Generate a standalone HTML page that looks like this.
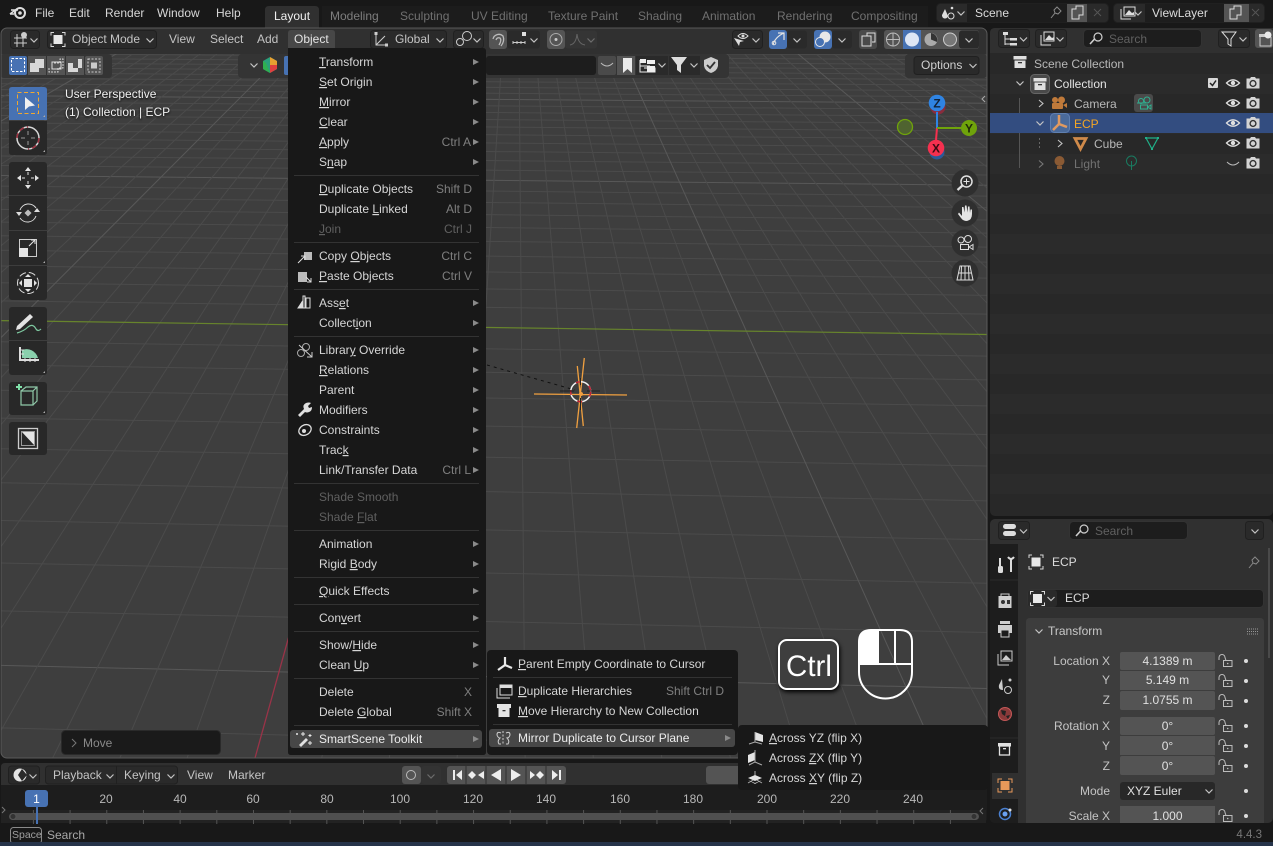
<!DOCTYPE html>
<html><head><meta charset="utf-8"><style>
html,body{margin:0;padding:0;background:#181818;overflow:hidden}
svg{display:block;position:absolute;left:0;top:0}
text{font-family:"Liberation Sans",sans-serif;font-size:12px;fill:#c4c4c4;white-space:pre}
.m text,text.m{fill:#d6d6d6}
.s{fill:#7f7f7f!important}
.r{text-anchor:end}
.c{text-anchor:middle}
.d{fill:#606060!important}
.u{text-decoration:underline}
.dd{fill:#2a2a2a;stroke:#202020}
.gb{fill:#545454}
.bb{fill:#4772b3}
.ln{fill:none;stroke:#d0d0d0;stroke-width:1.2}
.sep{fill:#333}
.w{fill:#e4e4e4}
</style></head><body>
<svg width="1273" height="846" viewBox="0 0 1273 846" xmlns="http://www.w3.org/2000/svg">
<defs>
<clipPath id="vc"><rect x="1" y="28" width="986" height="730" rx="6"/></clipPath>
<g id="ch"><path d="M-3.5-1.5 0 2 3.5-1.5" fill="none" stroke="#c4c4c4" stroke-width="1.2"/></g>
<g id="ar"><path d="M-3-3 3 0-3 3z" fill="#8a8a8a"/></g>
<g id="eye"><path d="M-6.5 0Q0-6.5 6.5 0 0 6.5-6.5 0z" fill="none" stroke="#e0e0e0" stroke-width="1.3"/><circle r="2.2" fill="#e0e0e0"/></g>
<g id="rc"><path d="M-6.5-4.5H-3L-2-6H2L3-4.5H6.5V5.5H-6.5z" fill="#d4d4d4"/><circle cy=".5" r="3.6" fill="#333"/><circle cy=".5" r="2.2" fill="#d4d4d4"/></g>
<g id="lk"><rect x="-1.5" y="-.5" width="8.5" height="6" fill="none" stroke="#bdbdbd"/><path d="M-6-1V-3.5A3 3 0 0 1 0-3.5L1-.5" fill="none" stroke="#bdbdbd"/><circle cx="2.700" cy="2.500" r=".8" fill="#bdbdbd"/></g>
<g id="dt"><circle r="2" fill="#dcdcdc"/></g>
<g id="ob"><rect x="-4.5" y="-4.5" width="9" height="9" fill="#e8e8e8"/><path d="M-7-4V-7H-4M4-7H7V-4M7 4V7H4M-4 7H-7V4" fill="none" stroke="#d8d8d8"/></g>
<g id="bx"><path d="M-6.5-6H6.5V-2.5H-6.5z" fill="#e0e0e0"/><path d="M-5.5-1.5H5.5V6H-5.5z" fill="#e0e0e0"/><rect x="-2" y="0" width="4" height="1.3" fill="#333"/></g>
<g id="sr"><circle cx="2" cy="-2" r="4" fill="none" stroke="#cfcfcf" stroke-width="1.2"/><path d="M-1-.5-6 5" stroke="#cfcfcf" stroke-width="1.6"/></g>
</defs>

<!-- top bar -->
<rect width="1273" height="28" fill="#181818"/>
<g transform="translate(18 13)"><path d="M-8 1-2-3.5M-7-3H0M-8 1H-4" stroke="#ddd" stroke-width="1.6" fill="none"/><circle cx="2" cy="0" r="5" fill="none" stroke="#ddd" stroke-width="2"/><circle cx="2" cy="0" r="1.8" fill="#ddd"/></g>
<g class="m"><text x="35" y="17">File</text><text x="69" y="17">Edit</text><text x="105" y="17">Render</text><text x="157" y="17">Window</text><text x="216" y="17">Help</text></g>
<path d="M319 28V10Q319 6 315 6H269Q265 6 265 10V28z" fill="#303030"/>
<rect x="322" y="6" width="606" height="21" fill="#1c1c1c"/>
<g><text x="274" y="20" fill="#fff" style="fill:#f0f0f0">Layout</text>
<g style="opacity:.85"><text class="s" x="330" y="20" style="fill:#8f8f8f!important">Modeling</text><text class="s" x="400" y="20">Sculpting</text><text class="s" x="471" y="20">UV Editing</text><text class="s" x="548" y="20">Texture Paint</text><text class="s" x="638" y="20">Shading</text><text class="s" x="702" y="20">Animation</text><text class="s" x="777" y="20">Rendering</text><text class="s" x="851" y="20">Compositing</text></g></g>

<!-- scene selectors -->
<rect class="dd" x="936.5" y="3.5" width="172" height="19" rx="4"/>
<rect x="967" y="4" width="100" height="18" fill="#1d1d1d"/>
<path d="M945 9L942 15A3 3 0 0 0 948 16zM953 13" fill="#ddd"/><circle cx="951" cy="16" r="3" fill="none" stroke="#ddd"/><circle cx="952" cy="8" r="1.3" fill="#ddd"/>
<use href="#ch" x="961" y="13"/>
<text class="w" x="975" y="17" style="fill:#dcdcdc">Scene</text>
<path d="M1051 18l4-5-1-3 3-3 4 4-3 3-3-1" fill="none" stroke="#8a8a8a"/>
<rect class="gb" x="1067" y="4" width="20" height="18"/>
<path d="M1072 9H1076V6H1083V15H1079V19H1072z" fill="none" stroke="#ddd"/>
<path d="M1094 9l7 7M1101 9l-7 7" stroke="#555"/>
<rect class="dd" x="1113.5" y="3.5" width="151" height="19" rx="4"/>
<rect x="1145" y="4" width="79" height="18" fill="#1d1d1d"/>
<path d="M1121 9V19H1131M1124 7H1135V16H1124z" fill="none" stroke="#ddd"/><path d="M1125 15l4-5 3 3 2-1v3z" fill="#ddd"/>
<use href="#ch" x="1138" y="13"/>
<text x="1152" y="17" style="fill:#dcdcdc">ViewLayer</text>
<rect class="gb" x="1224" y="4" width="25" height="18"/>
<path d="M1230 9H1234V6H1241V15H1237V19H1230z" fill="none" stroke="#ddd"/>
<path d="M1252 9l7 7M1259 9l-7 7" stroke="#555"/>

<!-- viewport -->
<rect x="1" y="28" width="986" height="730" rx="6" fill="#3e3e3e"/>
<g clip-path="url(#vc)">
<g id="grid"></g>
<path d="M0 320.6 987 334.5" stroke="#67842c" stroke-width="1.2"/>
<path d="M375.600 325 255 758" stroke="#9a3348" stroke-width="1.300"/>
<rect x="0" y="28" width="988" height="26" fill="#303030"/>
<rect x="0" y="54" width="112" height="24" rx="4" fill="#343434"/>
<rect x="238" y="54" width="491" height="24" rx="4" fill="#343434"/>
<rect x="905" y="54" width="82" height="24" rx="4" fill="#343434"/>
</g>
<rect x="1" y="28" width="986" height="730" rx="6" fill="none" stroke="#5a5a5a"/>

<!-- header row 1 -->
<rect class="dd" x="10.5" y="30.5" width="29" height="18" rx="3"/>
<path d="M14 38H27M14 43H27M17 34V47M23 34V47" stroke="#ccc" fill="none"/><circle cx="24" cy="35" r="3" fill="#ccc"/><use href="#ch" x="34" y="40"/>
<rect class="dd" x="47.5" y="30.5" width="109" height="18" rx="3"/>
<use href="#ob" x="58" y="39.5"/><text x="72" y="43">Object Mode</text><use href="#ch" x="150" y="40"/>
<text x="169" y="43">View</text><text x="210" y="43">Select</text><text x="257" y="43">Add</text>
<path d="M288 50V33Q288 30 291 30H332Q335 30 335 33V50z" fill="#474747"/><text x="294" y="43" style="fill:#e4e4e4">Object</text>
<rect class="dd" x="370.5" y="30.5" width="76" height="18" rx="3"/>
<path d="M376 33V45H387M376 45 385 36" fill="none" stroke="#ccc"/><rect x="374.500" y="32" width="3" height="3" fill="#ccc"/><rect x="385" y="43.500" width="3" height="3" fill="#ccc"/>
<text x="395" y="43">Global</text><use href="#ch" x="440" y="40"/>
<rect class="dd" x="453.500" y="30.5" width="30" height="18" rx="3"/>
<circle cx="460" cy="42" r="3.500" fill="none" stroke="#ccc"/><circle cx="467" cy="36" r="4.500" fill="none" stroke="#ccc"/><use href="#ch" x="477" y="40"/>
<rect x="489" y="30" width="18" height="19" rx="3" fill="#545454"/>
<path d="M493 39A6 6 0 0 1 503 36Q505 41 501 46M496 40Q497 37 500 38 502 40 499 45" fill="none" stroke="#bbb" stroke-width="1.300"/>
<rect x="507" y="30.500" width="33" height="18" rx="3" fill="#2a2a2a"/>
<path d="M513 41V44M517 41V44M521 41V44M525 41V44M513 42.500H525" stroke="#ccc"/><rect x="522" y="32" width="4" height="4" fill="#ddd"/><use href="#ch" x="534" y="40"/>
<rect x="547" y="30" width="18" height="19" rx="3" fill="#545454"/><circle cx="556" cy="39.500" r="6" fill="none" stroke="#aaa"/><circle cx="556" cy="39.500" r="1.500" fill="#ccc"/>
<rect x="565" y="30.500" width="32" height="18" rx="3" fill="#353535"/><path d="M570 45Q576 44 577 34 578 44 585 45" fill="none" stroke="#666"/><use href="#ch" x="591" y="40" opacity=".4"/>

<rect class="dd" x="732.500" y="30.500" width="30" height="18" rx="3"/>
<path d="M738 36Q743 31 748 36 743 41 738 36z" fill="none" stroke="#ddd"/><circle cx="743" cy="36" r="1.500" fill="#ddd"/><path d="M734 38 739 46 740 42 744 41z" fill="#ddd"/><use href="#ch" x="756" y="40"/>
<rect class="bb" x="769" y="30" width="18" height="19" rx="3"/><rect x="787" y="30.500" width="20" height="18" rx="3" fill="#2a2a2a"/>
<path d="M773 45Q775 37 784 33M778 33H784V40" fill="none" stroke="#e4e4e4" stroke-width="1.200"/><circle cx="774" cy="43" r="1.800" fill="none" stroke="#e4e4e4"/><use href="#ch" x="797" y="40"/>
<rect class="bb" x="814" y="30" width="18" height="19" rx="3"/><rect x="832" y="30.500" width="20" height="18" rx="3" fill="#2a2a2a"/>
<circle cx="825" cy="37" r="5.500" fill="#e8e8e8"/><circle cx="820" cy="42" r="4.500" fill="#4772b3" stroke="#e8e8e8"/><use href="#ch" x="842" y="40"/>
<rect x="859" y="30" width="18" height="19" rx="3" fill="#4a4a4a"/><path d="M867 36V33H875V42H872M862 36H871V46H862z" fill="none" stroke="#ddd"/>
<rect x="884" y="30" width="95" height="19" rx="3" fill="#545454"/>
<rect class="bb" x="903" y="30" width="18" height="19"/><rect x="959" y="30.500" width="20" height="18" rx="3" fill="#2a2a2a"/>
<circle cx="893" cy="39.500" r="6.500" fill="none" stroke="#bbb"/><path d="M887 39.500H900M893 33V46" stroke="#bbb"/>
<circle cx="912" cy="39.500" r="7" fill="#dde6f5"/>
<circle cx="931" cy="39.500" r="6.500" fill="#aaa"/><path d="M931 33V39.500L937 42A7 7 0 0 0 931 33z" fill="#333"/>
<circle cx="950" cy="39.500" r="6.500" fill="#777" stroke="#ccc"/><use href="#ch" x="969" y="40"/>

<!-- header row 2 -->
<rect class="bb" x="9" y="56" width="18" height="19" rx="2"/><rect class="gb" x="28" y="56" width="18" height="19"/><rect class="gb" x="47" y="56" width="18" height="19"/><rect class="gb" x="66" y="56" width="18" height="19"/><rect class="gb" x="85" y="56" width="18" height="19" rx="2"/>
<rect x="11.500" y="58.500" width="13" height="13" fill="none" stroke="#fff" stroke-dasharray="2.500 1.500"/>
<path d="M30 63H35V59H44V68H39V72H30z" fill="#d8d8d8"/>
<path d="M54 63H60V59H63V68H58V72H49V68" fill="none" stroke="#d0d0d0" stroke-dasharray="2 1"/><rect x="52" y="62" width="9" height="7" fill="none" stroke="#ddd"/>
<path d="M73 63H78V59H82V68H78V72H68V63z" fill="#d8d8d8"/><rect x="73" y="63" width="5" height="5" fill="#545454"/>
<rect x="88" y="59" width="12" height="13" fill="none" stroke="#ccc" stroke-dasharray="2 1.500"/><rect x="91" y="62.500" width="6" height="6" fill="#ccc"/>
<use href="#ch" x="254" y="65"/>
<path d="M270 57 277 61V69L270 73 263 69V61z" fill="#2aa07a"/><path d="M270 57 277 61V65H270z" fill="#e8a030"/><path d="M270 73 263 69V61L266 63z" fill="#30b050"/><path d="M277 65V69L270 73V65z" fill="#e04040"/>
<rect class="bb" x="284" y="56" width="6" height="19" rx="2"/>
<rect x="486" y="56" width="110" height="19" rx="3" fill="#1d1d1d"/>
<rect x="598" y="56" width="18" height="19" rx="2" fill="#4a4a4a"/><path d="M601 63Q607 69 613 63" fill="none" stroke="#bbb"/>
<rect x="617" y="56" width="18" height="19" fill="#545454"/><path d="M623 58H632V73L627.500 69 623 73z" fill="#eaeaea"/>
<rect x="636" y="56" width="32" height="19" fill="#2a2a2a"/><path d="M640 60V72H655V68H644M640 66H650" fill="none" stroke="#eee"/><rect x="640" y="59" width="6" height="4" fill="#eee"/><rect x="647" y="60" width="8" height="4" fill="#eee"/><rect x="647" y="66" width="8" height="6" fill="#eee"/><use href="#ch" x="662" y="65"/>
<rect x="669" y="56" width="31" height="19" fill="#2a2a2a"/><path d="M671 57H687L681 65V73L677 70V65z" fill="#ddd"/><use href="#ch" x="694" y="65"/>
<path d="M704 60 711 57 718 60V66Q717 71 711 73 705 71 704 66z" fill="#ccc"/><path d="M707 65 710 68 715 62" fill="none" stroke="#333" stroke-width="1.800"/>
<rect class="dd" x="914" y="56.500" width="65" height="18" rx="3"/><text x="921" y="69" style="fill:#d0d0d0">Options</text><use href="#ch" x="973" y="65.500"/>

<!-- toolbar -->
<path d="M9 90Q9 87 12 87H44Q47 87 47 90V120H9z" fill="#4772b3"/>
<path d="M9 121H47V152Q47 155 44 155H12Q9 155 9 152z" fill="#282828"/>
<rect x="9" y="162" width="38" height="138" rx="3" fill="#282828"/>
<path d="M9 195.500H47M9 230.500H47M9 265.500H47" stroke="#3d3d3d"/>
<rect x="9" y="307" width="38" height="68" rx="3" fill="#282828"/><path d="M9 340.500H47" stroke="#3d3d3d"/>
<rect x="9" y="382" width="38" height="33" rx="3" fill="#282828"/>
<rect x="9" y="422" width="38" height="33" rx="3" fill="#282828"/>
<rect x="17.500" y="92.500" width="21" height="21" fill="none" stroke="#f0a830" stroke-dasharray="4 2.500"/>
<path d="M25 97V110L29 106.500 35 105.500z" fill="#f0f0f0"/>
<circle cx="28" cy="138" r="11" fill="none" stroke="#d8d8d8" stroke-width="1.500"/><path d="M17 138A11 11 0 0 1 28 127M39 138A11 11 0 0 1 28 149" fill="none" stroke="#a03040" stroke-width="1.500" stroke-dasharray="5 3"/><path d="M21 138H25M31 138H35M28 131V135M28 141V145" stroke="#999"/>
<path d="M28 167 31 171H25zM28 189 31 185H25zM17 178 21 175V181zM39 178 35 175V181z" fill="#e4e4e4"/><path d="M22 178H25M31 178H34M28 172V175M28 181V184" stroke="#e4e4e4"/>
<rect x="25.500" y="210.500" width="5" height="5" transform="rotate(45 28 213)" fill="#bbb"/><path d="M20 210A9 9 0 0 1 36 208M36 216A9 9 0 0 1 20 218" fill="none" stroke="#ddd"/><path d="M16 212H22L19 216zM34 212H40L37 208z" fill="#ddd"/>
<rect x="19.500" y="239.500" width="17" height="17" fill="none" stroke="#ccc"/><rect x="19" y="248" width="9" height="9" fill="#e4e4e4"/><path d="M29 246 35 240M31 240H35V244" fill="none" stroke="#e4e4e4"/>
<circle cx="28" cy="283" r="10.500" fill="none" stroke="#ddd" stroke-dasharray="7 3"/><rect x="24" y="279" width="8" height="8" fill="#e4e4e4"/><path d="M28 274 25 277H31zM28 292 25 289H31zM19 283 22 280V286zM37 283 34 280V286z" fill="#e4e4e4"/>
<path d="M17 326 30 314 33 317 20 329 16 330z" fill="#e4e4e4"/><path d="M17 333Q24 331 28 327 33 323 36 329 38 332 41 329" fill="none" stroke="#7ec8a0" stroke-width="1.200"/>
<path d="M20 347V360H39" fill="none" stroke="#ddd" stroke-width="2"/><path d="M22 350A12 12 0 0 1 38 358H22z" fill="#8ad0ad"/><path d="M21 350H24M21 354H24M25 362V358M30 362V358M35 362V358" stroke="#ddd"/>
<path d="M21 391H33V405H21zM21 391 26 387H37V401L33 405M33 391 37 387" fill="none" stroke="#8fc8a8" stroke-width="1.200"/><path d="M19 384V390M16 387H22" stroke="#7fe0a8" stroke-width="2"/>
<rect x="18.500" y="428.500" width="19" height="20" fill="none" stroke="#ccc" stroke-width="1.300"/><path d="M21 431H35V446z" fill="#e4e4e4"/><rect x="21.500" y="431.500" width="13" height="14" fill="none" stroke="#999"/>
<path d="M43 117h2v-2z M43 152h2v-2zM43 263h2v-2zM43 373h2v-2zM43 413h2v-2z" fill="#aaa"/>

<!-- viewport overlays -->
<g style="filter:drop-shadow(0 1px 1px #000)"><text x="65" y="98" style="fill:#f2f2f2">User Perspective</text><text x="65" y="116" style="fill:#f2f2f2">(1) Collection | ECP</text></g>

<path d="M487 365 575 390" stroke="#111" stroke-dasharray="3 4"/>
<path d="M534 394 627 395M577.300 366 583.300 426M584.300 358 576.700 428" stroke="#f0a040" stroke-width="1.300" fill="none"/>
<circle cx="580.700" cy="391.700" r="10" fill="none" stroke="#f2f2f2" stroke-width="1.500"/><circle cx="580.700" cy="391.700" r="10" fill="none" stroke="#c02030" stroke-width="1.500" stroke-dasharray="5 9"/>
<path d="M560 391H574M587 391H600M580.500 378V385M580.500 398V410" stroke="#222"/><circle cx="581" cy="394" r="2" fill="#f0a040"/>

<!-- gizmo -->
<circle cx="905" cy="127" r="7.500" fill="#4f6330" stroke="#6fa30b" stroke-width="1.300"/>
<circle cx="938" cy="107" r="7.500" fill="#8a2c3c"/><circle cx="937" cy="152" r="7.500" fill="#2a5a9a"/>
<path d="M937 112V128" stroke="#2f84e3" stroke-width="2"/><path d="M937 128 936 140" stroke="#f5304f" stroke-width="2"/><path d="M937 128H961" stroke="#6fa30b" stroke-width="2"/>
<circle cx="937" cy="103" r="8.300" fill="#2f84e3"/><circle cx="969" cy="128" r="8" fill="#6fa30b"/><circle cx="936" cy="148" r="8.300" fill="#f5304f"/>
<g style="font-weight:bold"><text class="c" x="937" y="107.500" style="fill:#12233a;font-weight:bold">Z</text><text class="c" x="969" y="132.500" style="fill:#1e2a08;font-weight:bold">Y</text><text class="c" x="936" y="152.500" style="fill:#3a0a12;font-weight:bold">X</text></g>
<circle cx="965" cy="183" r="13.500" fill="#2f2f2f"/><circle cx="965" cy="213" r="13.500" fill="#2f2f2f"/><circle cx="965" cy="243" r="13.500" fill="#2f2f2f"/><circle cx="965" cy="273" r="13.500" fill="#2f2f2f"/>
<circle cx="966.500" cy="181.500" r="5.500" fill="none" stroke="#e0e0e0" stroke-width="1.500"/><path d="M963 185 957.500 190" stroke="#e0e0e0" stroke-width="2.200"/><path d="M963.500 181.500H969.500M966.500 178.500V184.500" stroke="#e0e0e0"/>
<path d="M958 214 961 218Q963 221 967 221 972 220 972 214V209.500L970.500 209.500 970 213 969.500 206.500H968L967.500 212.500 966.500 205.500H965L964.500 212.500 963.500 207H962L962 216 959 212.500z" fill="#e4e4e4"/>
<circle cx="961" cy="240" r="3" fill="none" stroke="#ddd"/><circle cx="968" cy="239" r="3.500" fill="none" stroke="#ddd"/><rect x="960.500" y="244.500" width="8" height="5" fill="none" stroke="#ddd"/><path d="M969 247 973 244.500V249.500z" fill="none" stroke="#ddd"/>
<path d="M960 266H970L973 280H957zM965 266V280M958.500 273H971.500M961.500 266 961 280M968.500 266 969 280" fill="none" stroke="#ddd"/>
<path d="M985 96 982 99 985 102" fill="none" stroke="#aaa"/>

<!-- ctrl / mouse -->
<g style="filter:drop-shadow(1px 2px 2px #000)">
<rect x="779" y="640" width="59" height="49" rx="8" fill="#3e3e3e" stroke="#fff" stroke-width="2"/>
<text class="c" x="809" y="676" style="font-size:29.500px;fill:#fff">Ctrl</text></g>
<path d="M859 664V642Q859 630 871 630H878V664z" fill="#fff"/>
<path d="M859 664V642Q859 630 871 630H900Q912 630 912 642V672A26.500 26.500 0 0 1 859 672zM859 664H912M878 630V664M895 630V664" fill="none" stroke="#fff" stroke-width="2"/>

<!-- Move panel -->
<rect x="61.500" y="730.500" width="159" height="24" rx="4" fill="#1a1a1a" stroke="#2a2a2a"/>
<path d="M72 739 76 743 72 747" fill="none" stroke="#777"/><text x="83" y="747" class="s" style="fill:#8a8a8a!important">Move</text>

<!-- timeline -->
<path d="M1 785V767Q1 763 5 763H983Q987 763 987 767V785z" fill="#303030"/>
<path d="M1 785H987V818Q987 822 983 822H5Q1 822 1 818z" fill="#1d1d1d"/>
<rect class="dd" x="8.500" y="766" width="31" height="18" rx="3"/><circle cx="20" cy="775" r="6.500" fill="#e4e4e4"/><path d="M22 769 18 775 22 781 27 775z" fill="#2a2a2a"/><use href="#ch" x="33" y="776"/>
<rect class="dd" x="45.500" y="766" width="132" height="18" rx="3"/><path d="M116.500 766V784" stroke="#202020"/>
<text x="53" y="779">Playback</text><use href="#ch" x="110" y="776"/><text x="124" y="779">Keying</text><use href="#ch" x="171" y="776"/>
<text x="187" y="779">View</text><text x="228" y="779">Marker</text>
<rect x="402" y="766" width="19" height="18" rx="3" fill="#545454"/><circle cx="411" cy="775" r="4.500" fill="none" stroke="#bbb"/><rect x="421" y="766" width="20" height="18" rx="3" fill="#333"/><use href="#ch" x="431" y="776" opacity=".4"/>
<rect x="447" y="766" width="119" height="18" rx="3" fill="#545454"/>
<path d="M466 766V784M486 766V784M506 766V784M526 766V784M546 766V784" stroke="#303030"/>
<path d="M453 770V780H455V770zM462 770 456 775 462 780z" fill="#eee"/>
<path d="M472 771 476 775 472 779 468 775zM478 775 484 771V779z" fill="#eee"/>
<path d="M501 769 491 775 501 781z" fill="#eee"/><path d="M511 769 521 775 511 781z" fill="#eee"/>
<path d="M530 771 535 775 530 779zM540 771 544 775 540 779 536 775z" fill="#eee"/>
<path d="M552 770 558 775 552 780zM559 770H561V780H559z" fill="#eee"/>
<rect x="706" y="766" width="40" height="18" rx="3" fill="#545454"/>
<rect x="1" y="810" width="985" height="13" fill="#222"/>
<g id="ticks"></g>
<rect x="9" y="813" width="970" height="7" rx="3.500" fill="#505050"/><circle cx="13" cy="816.500" r="3" fill="#333" stroke="#555"/><circle cx="974" cy="816.500" r="3" fill="#333" stroke="#555"/>
<g><text class="c" x="106" y="803" style="fill:#b8b8b8">20</text><text class="c" x="180" y="803" style="fill:#b8b8b8">40</text><text class="c" x="253" y="803" style="fill:#b8b8b8">60</text><text class="c" x="327" y="803" style="fill:#b8b8b8">80</text><text class="c" x="400" y="803" style="fill:#b8b8b8">100</text><text class="c" x="473" y="803" style="fill:#b8b8b8">120</text><text class="c" x="546" y="803" style="fill:#b8b8b8">140</text><text class="c" x="620" y="803" style="fill:#b8b8b8">160</text><text class="c" x="693" y="803" style="fill:#b8b8b8">180</text><text class="c" x="767" y="803" style="fill:#b8b8b8">200</text><text class="c" x="840" y="803" style="fill:#b8b8b8">220</text><text class="c" x="913" y="803" style="fill:#b8b8b8">240</text></g>
<rect x="36" y="805" width="2" height="19" fill="#4772b3"/><rect class="bb" x="25" y="790" width="23" height="17" rx="3"/><text class="c" x="36.500" y="803" style="fill:#fff">1</text>
<path d="M2 807 5 810 2 813M983 808 980 811 983 814" fill="none" stroke="#777"/>

<!-- status bar -->
<rect y="824" width="1273" height="18" fill="#181818"/>
<rect x="10.500" y="827.500" width="31" height="16" rx="3" fill="none" stroke="#8a8a8a"/>
<text x="12" y="838" style="fill:#a0a0a0;font-size:10.500px">Space</text><text x="47" y="839" style="fill:#a8a8a8">Search</text>
<text class="r" x="1262" y="838" style="fill:#777;font-size:11.500px">4.4.3</text>
<rect y="842" width="1273" height="4" fill="#26344a"/>

<!-- outliner -->
<rect x="990" y="28" width="283" height="488" rx="5" fill="#282828"/>
<path d="M990 53V33Q990 28 995 28H1273V53z" fill="#303030"/>
<path d="M990 74H1273V94H990zM990 114H1273V134H990zM990 154H1273V174H990zM990 194H1273V214H990zM990 234H1273V254H990zM990 274H1273V294H990zM990 314H1273V334H990zM990 354H1273V374H990zM990 394H1273V414H990zM990 434H1273V454H990zM990 474H1273V494H990z" fill="#2b2b2b"/>
<rect class="dd" x="998.500" y="29.500" width="31" height="18" rx="3"/><path d="M1005 35V45M1005 39H1010M1005 44H1010" stroke="#ddd" fill="none"/><rect x="1003" y="32" width="5" height="3" fill="#ddd"/><rect x="1010" y="38" width="7" height="2.500" fill="#ddd"/><rect x="1010" y="43" width="7" height="2.500" fill="#ddd"/><use href="#ch" x="1023.500" y="39"/>
<rect class="dd" x="1035.500" y="29.500" width="31" height="18" rx="3"/><path d="M1041 35V45H1051M1044 32H1054V41H1044z" fill="none" stroke="#ddd"/><path d="M1045 40l4-5 3 3 2-1v3z" fill="#ddd"/><use href="#ch" x="1060" y="39"/>
<rect x="1083.500" y="29.500" width="118" height="18" rx="4" fill="#1d1d1d" stroke="#333"/><use href="#sr" x="1096" y="39"/><text x="1109" y="43" style="fill:#606060">Search</text>
<rect class="dd" x="1218.500" y="29.500" width="31" height="18" rx="3"/><path d="M1222 32H1236L1231 39V46L1228 44V39z" fill="none" stroke="#ddd"/><use href="#ch" x="1243" y="39"/>
<rect x="1255" y="29" width="18" height="19" rx="3" fill="#545454"/><path d="M1260 37V46H1271V37" fill="none" stroke="#ccc"/><rect x="1259" y="34" width="12" height="3" fill="#ccc"/><circle cx="1268" cy="35" r="3.500" fill="#e8e8e8"/>

<use href="#bx" x="1020" y="62"/><text x="1034" y="68" style="fill:#b8b8b8">Scene Collection</text>
<use href="#ch" x="1020" y="83"/><rect x="1030.500" y="74.500" width="19" height="19" rx="4" fill="#4a4a4a" stroke="#666"/><use href="#bx" x="1040" y="84"/><text x="1054" y="88" style="fill:#e4e4e4">Collection</text>
<rect x="1208" y="78" width="10" height="10" rx="1" fill="#d8d8d8"/><path d="M1210 83 1212.500 85.500 1216 80.500" fill="none" stroke="#222" stroke-width="1.500"/>
<use href="#eye" x="1233" y="83"/><use href="#rc" x="1253" y="83"/>
<path d="M1019.500 98V168" stroke="#555"/>
<path d="M1039 100 1043 103.500 1039 107" fill="none" stroke="#c4c4c4" stroke-width="1.100"/>
<circle cx="1055" cy="100" r="3" fill="#c07a3a"/><circle cx="1061.500" cy="100" r="3.500" fill="#c07a3a"/><rect x="1052" y="103" width="11" height="6" rx="1" fill="#c07a3a"/><path d="M1063 105 1067 103V108z" fill="#c07a3a"/>
<text x="1074" y="108" style="fill:#b8b8b8">Camera</text>
<rect x="1134" y="94" width="19" height="18" rx="3" fill="#4a4a4a"/><circle cx="1141" cy="101" r="2.500" fill="none" stroke="#30b090"/><circle cx="1147" cy="100" r="3" fill="none" stroke="#30b090"/><rect x="1140.500" y="105" width="7" height="4" fill="none" stroke="#30b090"/><path d="M1147.500 107 1151 105V109zM1137 103H1146" fill="none" stroke="#30b090"/>
<use href="#eye" x="1233" y="103"/><use href="#rc" x="1253" y="103"/>
<rect x="990" y="113" width="283" height="20" fill="#334d80"/>
<use href="#ch" x="1040" y="123"/><rect x="1050.500" y="113.500" width="19" height="19" rx="4" fill="#4a6a9a" stroke="#6080b0"/>
<path d="M1059 115V124L1053 130M1059 124 1067 127" fill="none" stroke="#e09a60" stroke-width="2.500"/>
<text x="1074" y="128" style="fill:#f5a623">ECP</text><use href="#eye" x="1233" y="123"/><use href="#rc" x="1253" y="123"/>
<path d="M1039.500 138V149" stroke="#666" stroke-dasharray="2 2"/>
<path d="M1058 140 1062 143.500 1058 147" fill="none" stroke="#c4c4c4" stroke-width="1.100"/>
<path d="M1075 138.500H1086L1080.500 149z" fill="none" stroke="#d08a4a" stroke-width="2.800"/>
<text x="1094" y="148" style="fill:#b8b8b8">Cube</text>
<path d="M1146 138H1158L1152 149z" fill="none" stroke="#20b088" stroke-width="1.200"/><path d="M1146 137V139M1158 137V139M1152 148V150" stroke="#20b088" stroke-width="2"/>
<use href="#eye" x="1233" y="143"/><use href="#rc" x="1253" y="143"/>
<path d="M1039 160.500 1043 164 1039 167.500" fill="none" stroke="#777" stroke-width="1.100"/>
<circle cx="1059.500" cy="161" r="5" fill="#8a5a34"/><rect x="1057" y="166" width="5" height="3" fill="#8a5a34"/>
<text x="1074" y="168" style="fill:#727272">Light</text>
<circle cx="1131.500" cy="161" r="5" fill="none" stroke="#1a7a60"/><path d="M1131.500 161V170" stroke="#1a7a60"/>
<path d="M1227 162Q1233 168 1239 162" fill="none" stroke="#bbb"/><use href="#rc" x="1253" y="163"/>

<!-- properties -->
<rect x="990" y="519" width="283" height="304" rx="5" fill="#303030"/>
<path d="M990 544H1018V823H995Q990 823 990 818z" fill="#1d1d1d"/>
<path d="M990 580H1018M990 738H1018" stroke="#2a2a2a"/>
<rect class="dd" x="998.500" y="521.500" width="31" height="18" rx="3"/><rect x="1003" y="524" width="13" height="5" rx="2.500" fill="#ddd"/><rect x="1003" y="531" width="13" height="5" rx="2.500" fill="#ddd"/><use href="#ch" x="1023.500" y="531"/>
<rect x="1069.500" y="521.500" width="118" height="18" rx="4" fill="#1d1d1d" stroke="#333"/><use href="#sr" x="1082" y="531"/><text x="1095" y="535" style="fill:#606060">Search</text>
<rect class="dd" x="1245.500" y="521.500" width="18" height="18" rx="3"/><use href="#ch" x="1255" y="531"/>

<path d="M992 773H1018V799H992Q992 786 992 773z" fill="#303030"/>
<path d="M1000 558V566M1011 558V572M1008 557Q1011 561 1014 557" stroke="#ddd" stroke-width="2" fill="none"/><rect x="998" y="566" width="5" height="7" rx="1.500" fill="#ddd"/>
<rect x="998.500" y="596" width="13" height="12" fill="#cfcfcf"/><path d="M1001 596V594H1009V596" fill="none" stroke="#ccc"/><circle cx="1003" cy="602" r="2" fill="#333"/><rect x="1007" y="600" width="3" height="4" fill="#333"/>
<path d="M998 625H1012V633H998z" fill="#cfcfcf"/><rect x="1000" y="621" width="10" height="3" fill="#cfcfcf"/><rect x="1001" y="630" width="8" height="7" fill="#1d1d1d" stroke="#ccc"/>
<path d="M998 654V665H1009M1001 651H1012V661H1001z" fill="none" stroke="#ccc"/><path d="M1002 660 1006 655 1011 660z" fill="#ccc"/>
<path d="M1002 679 999 685Q998 690 1003 690z" fill="#ccc"/><circle cx="1008" cy="690" r="3.500" fill="none" stroke="#ccc"/><circle cx="1010" cy="680" r="1.500" fill="#ccc"/>
<circle cx="1005" cy="714" r="6.500" fill="#8a3a3a" stroke="#c45858"/><path d="M1001 710 1006 711 1005 716 1002 714zM1006 716 1010 715 1008 719z" fill="#222"/>
<rect x="998" y="743" width="13" height="3.500" fill="#e0e0e0"/><rect x="999.500" y="746" width="10" height="9" fill="none" stroke="#e0e0e0" stroke-width="1.300"/><rect x="1003" y="748" width="3" height="1.300" fill="#e0e0e0"/>
<rect x="1000.500" y="781" width="9" height="9" fill="#e8995a"/><path d="M998 783V779H1002M1008 779H1012V783M1012 788V792H1008M1002 792H998V788" fill="none" stroke="#e8995a"/>
<circle cx="1005" cy="814" r="5.500" fill="none" stroke="#4a80d0" stroke-width="1.500"/><circle cx="1005" cy="814" r="2.500" fill="#6aa0f0"/><circle cx="1010" cy="810" r="1.500" fill="#ddd"/>

<use href="#ob" x="1036" y="562"/><text x="1052" y="566" style="fill:#dcdcdc">ECP</text>
<path d="M1249 568l4-5-1-3 3-3 4 4-3 3-3-1" fill="none" stroke="#888"/>
<rect x="1027.500" y="589.500" width="236" height="18" rx="4" fill="#1d1d1d" stroke="#333"/><rect x="1028" y="590" width="29" height="17" rx="3" fill="#2a2a2a"/><use href="#ob" x="1037.500" y="598.500"/><use href="#ch" x="1051" y="598.500"/>
<text x="1065" y="602" style="fill:#dcdcdc">ECP</text>

<path d="M1026 823V622Q1026 618 1030 618H1260Q1264 618 1264 622V823z" fill="#3d3d3d"/>
<use href="#ch" x="1039" y="631"/><text x="1048" y="635" style="fill:#c8c8c8">Transform</text>
<path d="M1247 629h11M1247 631.500h11M1247 634h11" stroke="#999" stroke-dasharray="1 1"/>
<g>
<rect class="gb" x="1120" y="652" width="95" height="18" rx="2"/><rect class="gb" x="1120" y="671" width="95" height="19"/><rect class="gb" x="1120" y="691" width="95" height="19" rx="2"/>
<rect class="gb" x="1120" y="717" width="95" height="18" rx="2"/><rect class="gb" x="1120" y="736" width="95" height="19"/><rect class="gb" x="1120" y="756" width="95" height="19" rx="2"/>
<rect x="1120" y="782" width="95" height="18" rx="3" fill="#282828"/><path d="M1120 806H1215V823H1120z" fill="#545454"/></g>
<g><text class="r" x="1110" y="665">Location X</text><text class="r" x="1110" y="684">Y</text><text class="r" x="1110" y="704">Z</text><text class="r" x="1110" y="730">Rotation X</text><text class="r" x="1110" y="750">Y</text><text class="r" x="1110" y="770">Z</text><text class="r" x="1110" y="795">Mode</text><text class="r" x="1110" y="820">Scale X</text></g>
<g><text class="c" x="1167.500" y="665" style="fill:#e0e0e0">4.1389 m</text><text class="c" x="1167.500" y="684" style="fill:#e0e0e0">5.149 m</text><text class="c" x="1167.500" y="704" style="fill:#e0e0e0">1.0755 m</text><text class="c" x="1167.500" y="730" style="fill:#e0e0e0">0°</text><text class="c" x="1167.500" y="750" style="fill:#e0e0e0">0°</text><text class="c" x="1167.500" y="770" style="fill:#e0e0e0">0°</text><text x="1127" y="795" style="fill:#e0e0e0">XYZ Euler</text><text class="c" x="1167.500" y="820" style="fill:#e0e0e0">1.000</text></g>
<use href="#ch" x="1209" y="791"/>
<use href="#lk" x="1225" y="661"/><use href="#lk" x="1225" y="681"/><use href="#lk" x="1225" y="701"/><use href="#lk" x="1225" y="726"/><use href="#lk" x="1225" y="746"/><use href="#lk" x="1225" y="766"/><use href="#lk" x="1225" y="816"/>
<use href="#dt" x="1246" y="661"/><use href="#dt" x="1246" y="681"/><use href="#dt" x="1246" y="701"/><use href="#dt" x="1246" y="726"/><use href="#dt" x="1246" y="746"/><use href="#dt" x="1246" y="766"/><use href="#dt" x="1246" y="791"/><use href="#dt" x="1246" y="816"/>
<rect x="1268" y="548" width="2" height="110" fill="#4a4a4a"/>

<!-- main menu -->
<path d="M288 48H483Q486 48 486 51V752Q486 755 483 755H291Q288 755 288 752z" fill="#181818"/>
<g class="sep"><rect x="294" y="175" width="185" height="1"/><rect x="294" y="242" width="185" height="1"/><rect x="294" y="289" width="185" height="1"/><rect x="294" y="336" width="185" height="1"/><rect x="294" y="483" width="185" height="1"/><rect x="294" y="530" width="185" height="1"/><rect x="294" y="577" width="185" height="1"/><rect x="294" y="604" width="185" height="1"/><rect x="294" y="631" width="185" height="1"/><rect x="294" y="678" width="185" height="1"/><rect x="294" y="725" width="185" height="1"/></g>
<rect x="290" y="730" width="192" height="18" rx="3" fill="#474747"/>
<g class="m">
<text x="319" y="66"><tspan class="u">T</tspan>ransform</text>
<text x="319" y="86"><tspan class="u">S</tspan>et Origin</text>
<text x="319" y="106"><tspan class="u">M</tspan>irror</text>
<text x="319" y="126"><tspan class="u">C</tspan>lear</text>
<text x="319" y="146"><tspan class="u">A</tspan>pply</text>
<text x="319" y="166">S<tspan class="u">n</tspan>ap</text>
<text x="319" y="193"><tspan class="u">D</tspan>uplicate Objects</text>
<text x="319" y="213">Duplicate <tspan class="u">L</tspan>inked</text>
<text x="319" y="233" class="d"><tspan class="u">J</tspan>oin</text>
<text x="319" y="260">Copy <tspan class="u">O</tspan>bjects</text>
<text x="319" y="280"><tspan class="u">P</tspan>aste Objects</text>
<text x="319" y="307">Ass<tspan class="u">e</tspan>t</text>
<text x="319" y="327">Collect<tspan class="u">i</tspan>on</text>
<text x="319" y="354">Librar<tspan class="u">y</tspan> Override</text>
<text x="319" y="374"><tspan class="u">R</tspan>elations</text>
<text x="319" y="394">Parent</text>
<text x="319" y="414">Modifiers</text>
<text x="319" y="434">Constraints</text>
<text x="319" y="454">Trac<tspan class="u">k</tspan></text>
<text x="319" y="474">Link/Transfer Data</text>
<text x="319" y="501" class="d">Shade Smooth</text>
<text x="319" y="521" class="d">Shade <tspan class="u">F</tspan>lat</text>
<text x="319" y="548">Animation</text>
<text x="319" y="568">Rigid <tspan class="u">B</tspan>ody</text>
<text x="319" y="595"><tspan class="u">Q</tspan>uick Effects</text>
<text x="319" y="622">Con<tspan class="u">v</tspan>ert</text>
<text x="319" y="649">Show/<tspan class="u">H</tspan>ide</text>
<text x="319" y="669">Clean <tspan class="u">U</tspan>p</text>
<text x="319" y="696">Delete</text>
<text x="319" y="716">Delete <tspan class="u">G</tspan>lobal</text>
<text x="319" y="743" style="fill:#ececec">SmartScene Toolkit</text>
</g>
<g><text class="s r" x="471" y="146">Ctrl A</text><text class="s r" x="472" y="193">Shift D</text><text class="s r" x="472" y="213">Alt D</text><text class="d r" x="472" y="233">Ctrl J</text><text class="s r" x="472" y="260">Ctrl C</text><text class="s r" x="472" y="280">Ctrl V</text><text class="s r" x="471" y="474">Ctrl L</text><text class="s r" x="472" y="696">X</text><text class="s r" x="472" y="716">Shift X</text></g>
<use href="#ar" x="476" y="62"/><use href="#ar" x="476" y="82"/><use href="#ar" x="476" y="102"/><use href="#ar" x="476" y="122"/><use href="#ar" x="476" y="142"/><use href="#ar" x="476" y="162"/><use href="#ar" x="476" y="303"/><use href="#ar" x="476" y="323"/><use href="#ar" x="476" y="350"/><use href="#ar" x="476" y="370"/><use href="#ar" x="476" y="390"/><use href="#ar" x="476" y="410"/><use href="#ar" x="476" y="430"/><use href="#ar" x="476" y="450"/><use href="#ar" x="476" y="470"/><use href="#ar" x="476" y="544"/><use href="#ar" x="476" y="564"/><use href="#ar" x="476" y="591"/><use href="#ar" x="476" y="618"/><use href="#ar" x="476" y="645"/><use href="#ar" x="476" y="665"/><use href="#ar" x="476" y="739"/>
<!-- menu icons -->
<path d="M304 252H312V260H304z" fill="#bbb"/><path d="M298 263 305 256M301 256H305V260" fill="none" stroke="#ddd"/>
<path d="M298 272H307V282H298z" fill="#bbb"/><path d="M306 277 311 282M311 278V282H307" fill="none" stroke="#ddd"/>
<path d="M298 308 302 302V308zM303 296H305V308H303zM306 298H310V308H306z" fill="none" stroke="#ddd"/><path d="M298 308 302 301V308z" fill="#ddd"/>
<circle cx="301" cy="353" r="3.500" fill="none" stroke="#aaa"/><circle cx="306" cy="347" r="3.500" fill="none" stroke="#aaa"/><path d="M299 345 312 357M312 352V357H307" fill="none" stroke="#ccc"/>
<path d="M298 415 304 409Q302 405 306 403 309 402 311 403L308 406 309 408 312 407Q312 411 309 412 307 413 305 412L300 417z" fill="#e0e0e0"/>
<ellipse cx="305" cy="430" rx="6.500" ry="5" fill="none" stroke="#ddd" stroke-width="1.300" transform="rotate(-30 305 430)"/><circle cx="304" cy="431" r="2" fill="#ddd"/>
<path d="M299 745 306 738 308 740 301 747z" fill="#e0e0e0"/><path d="M303 732V736M301 734H305M310 734V737M308.500 735.500H311.500M310 741V745M308 743H312M297 733V735M296 734H298" stroke="#e8e8e8"/>

<!-- submenu 1 -->
<rect x="487" y="650" width="251" height="105" rx="4" fill="#181818"/>
<rect x="493" y="677" width="239" height="1" fill="#333"/><rect x="493" y="724" width="239" height="1" fill="#333"/>
<rect x="489" y="729" width="246" height="18" rx="3" fill="#474747"/>
<g class="m">
<text x="518" y="668"><tspan class="u">P</tspan>arent Empty Coordinate to Cursor</text>
<text x="518" y="695"><tspan class="u">D</tspan>uplicate Hierarchies</text>
<text x="518" y="715"><tspan class="u">M</tspan>ove Hierarchy to New Collection</text>
<text x="518" y="742" style="fill:#ececec">Mirror Duplicate to Cursor Plane</text>
</g>
<text class="s r" x="724" y="695">Shift Ctrl D</text>
<use href="#ar" x="728" y="738"/>
<path d="M505 657V665L498 670M505 665 512 668" fill="none" stroke="#e8e8e8" stroke-width="2.200"/>
<path d="M497 688V698H510M500 685H512V695H500z" fill="none" stroke="#ddd"/><rect x="500" y="685" width="12" height="3" fill="#ddd"/>
<rect x="497" y="704" width="14" height="4" fill="#e4e4e4"/><rect x="498.500" y="708" width="11" height="9" fill="#e4e4e4"/><rect x="502.500" y="710" width="3" height="1.300" fill="#333"/>
<path d="M503 731V745" stroke="#ccc" stroke-dasharray="2 1.500"/><path d="M501 733Q497 731 497 735 498 738 500 738 497 741 499 744L501 744M506 733Q510 731 510 735 509 738 507 738 510 741 508 744L506 744" fill="none" stroke="#ccc"/>

<!-- submenu 2 -->
<rect x="738" y="725" width="250" height="65" rx="4" fill="#181818"/>
<g class="m">
<text x="769" y="742"><tspan class="u">A</tspan>cross YZ (flip X)</text>
<text x="769" y="762">Across <tspan class="u">Z</tspan>X (flip Y)</text>
<text x="769" y="782">Across <tspan class="u">X</tspan>Y (flip Z)</text>
</g>
<path d="M755 732 763 735V742L755 740z" fill="#e4e4e4"/><path d="M755 732V742L749 744M755 742 762 744" fill="none" stroke="#aaa"/>
<path d="M755 752 748 755V763L755 760z" fill="#e4e4e4"/><path d="M755 750V762L749 765M755 762 762 765" fill="none" stroke="#aaa"/>
<path d="M755 771V778M748 783 755 779 762 783" fill="none" stroke="#aaa"/><path d="M748 778 755 775 762 778 755 781z" fill="#e4e4e4"/><path d="M748 780 755 784 762 780 755 783z" fill="#ccc"/>
</svg>
<script>
(function(){
var ns='http://www.w3.org/2000/svg',g=document.getElementById('grid'),t=document.getElementById('ticks');
function L(p,a,b,c,d,col,w){var l=document.createElementNS(ns,'line');l.setAttribute('x1',a);l.setAttribute('y1',b);l.setAttribute('x2',c);l.setAttribute('y2',d);l.setAttribute('stroke',col);l.setAttribute('stroke-width',w);p.appendChild(l);}
var vx=517,vy=-180;
for(var n=-11;n<=36;n++){if(n==0)continue;var y0=1/(0.001998+0.0000815*n)-180;var y1=y0+(y0+180)/36000*987;
var maj=n%10==0;L(g,0,y0,987,y1,maj?'#585858':'#4b4b4b',1);}
var k=(758-vy)/(325-vy),kt=(28-vy)/(325-vy);
for(var m=-45;m<=40;m++){if(m==0)continue;var x=375.6+36.2*m+(m>0?0.06*m*m:0);
var maj2=m%10==0;L(g,vx+(x-vx)*kt,28,vx+(x-vx)*k,758,maj2?'#585858':'#4b4b4b',1);}
for(var i=0;i<26;i++){var tx=33.4+36.68*i;L(t,tx,810,tx,814,'#555',1);L(t,tx,820,tx,824,'#555',1);}
})();
</script>
</body></html>
